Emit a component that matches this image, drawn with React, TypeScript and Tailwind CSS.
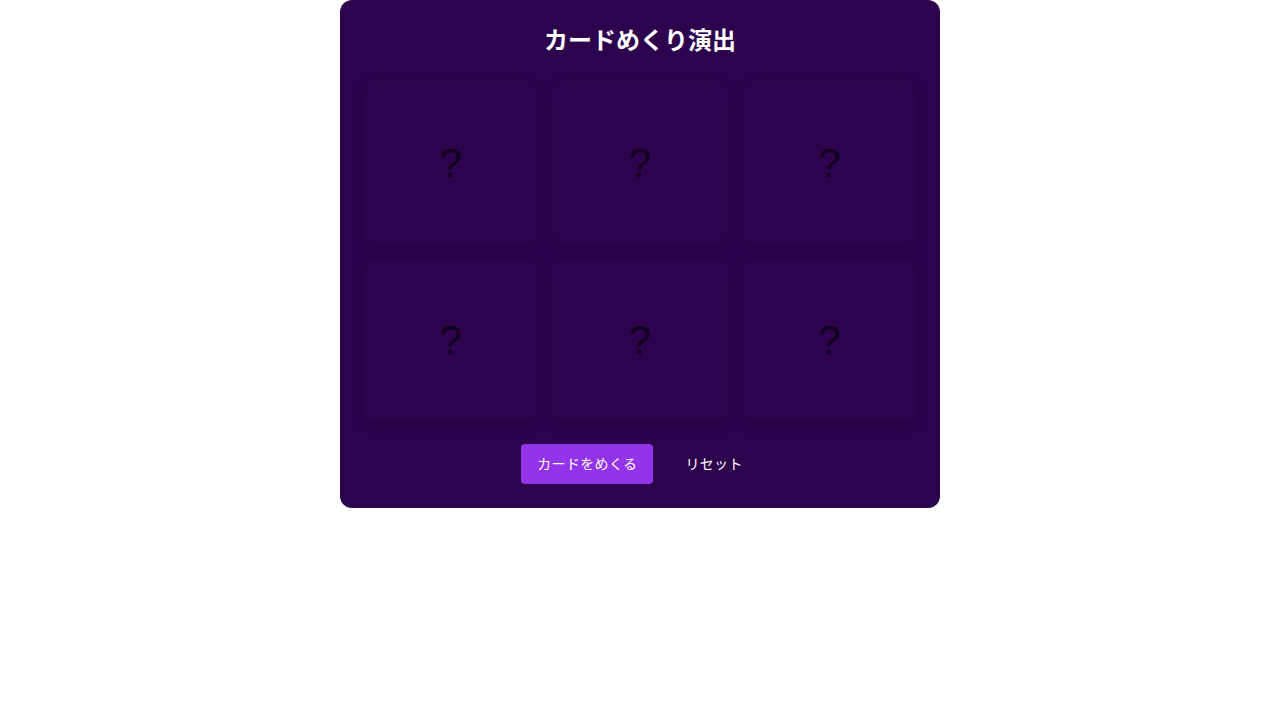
import React, { useState } from 'react';

const CARDS = [0, 1, 2, 3, 4, 5];

export default function App() {
  const [flipped, setFlipped] = useState<boolean[]>(CARDS.map(() => false));

  const flipAll = () => setFlipped(CARDS.map(() => true));
  const reset = () => setFlipped(CARDS.map(() => false));

  return (
    <div
      className="min-h-screen bg-white flex justify-center"
      style={{ fontFamily: '"Liberation Sans", "Noto Sans CJK JP", sans-serif' }}
    >
      <div className="w-[600px] h-fit bg-[#2e034d] rounded-xl p-6">
        <h1 className="text-white text-[24px] font-bold text-center leading-[34px] mb-6">
          カードめくり演出
        </h1>

        <div className="grid grid-cols-3 gap-4">
          {CARDS.map((i) => (
            <div
              key={i}
              className="h-[161px] rounded-lg bg-[#2e034d] shadow-[0_4px_14px_rgba(0,0,0,0.18)] flex items-center justify-center"
            >
              <span className="text-[40px] text-[#10001c] leading-none">
                {flipped[i] ? '★' : '?'}
              </span>
            </div>
          ))}
        </div>

        <div className="flex justify-center gap-4 mt-6">
          <button
            onClick={flipAll}
            className="h-10 px-4 rounded bg-[#9333ea] text-white text-sm tracking-wide"
          >
            カードをめくる
          </button>
          <button onClick={reset} className="h-10 px-4 rounded text-white text-sm tracking-wide">
            リセット
          </button>
        </div>
      </div>
    </div>
  );
}
